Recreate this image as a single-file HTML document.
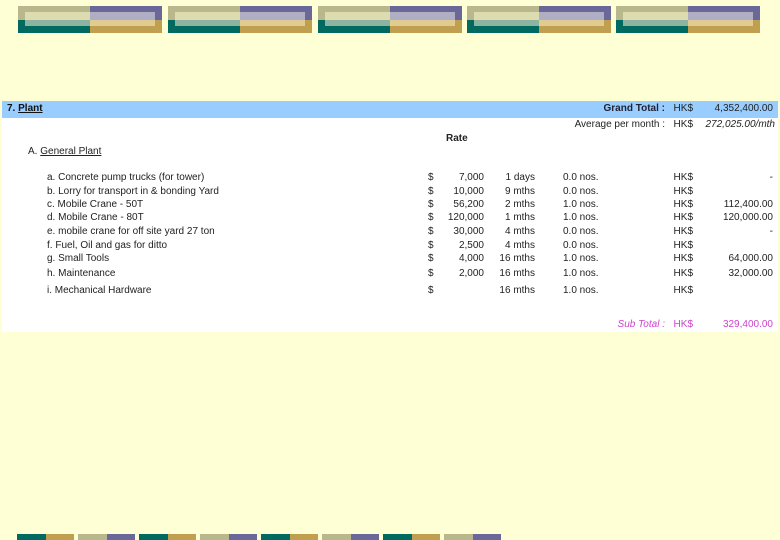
<!DOCTYPE html>
<html><head><style>
body{margin:0;width:780px;height:540px;background:#ffffd5;position:relative;overflow:hidden;font-family:"Liberation Sans",sans-serif;}
.tb{position:absolute;top:6px;width:144px;height:27px;}
.tb div{position:absolute;}
.bb{position:absolute;top:534px;height:6px;width:57px;}
.bb div{position:absolute;top:0;height:6px;}
#panel{position:absolute;left:2px;top:101px;width:776px;height:231px;background:#fff;}
#hdr{position:absolute;left:2px;top:101px;width:776px;height:17px;background:#99ccff;}
.t{position:absolute;font-size:10px;color:#222;white-space:nowrap;line-height:12px;}
.r{text-align:right;}
</style></head><body>
<div id="panel"></div><div id="hdr"></div>
<script>
var h='';
[18,168,318,467,616].forEach(function(x){
h+='<div class="tb" style="left:'+x+'px"><div style="left:0;top:0;width:72px;height:14px;background:#b8b88c"></div><div style="left:72px;top:0;width:72px;height:14px;background:#6a6898"></div><div style="left:0;top:14px;width:72px;height:13px;background:#006a60"></div><div style="left:72px;top:14px;width:72px;height:13px;background:#c0a050"></div><div style="left:7px;top:6px;width:65px;height:8px;background:#dcdcb0"></div><div style="left:72px;top:6px;width:65px;height:8px;background:#b0aec4"></div><div style="left:7px;top:14px;width:65px;height:6px;background:#8cb4a0"></div><div style="left:72px;top:14px;width:65px;height:6px;background:#e0cc90"></div></div>';});
for(var i=0;i<8;i++){var x=17+i*61;var a=i%2==0?'#006a60':'#b8b88c',b=i%2==0?'#c0a050':'#6a6898';
h+='<div class="bb" style="left:'+x+'px"><div style="left:0;width:29px;background:'+a+'"></div><div style="left:29px;width:28px;background:'+b+'"></div></div>';}
var rows=[
[172,'a. Concrete pump trucks (for tower)','7,000','1 days','0.0 nos.','-'],
[186,'b.  Lorry for transport in & bonding Yard','10,000','9 mths','0.0 nos.',''],
[199,'c. Mobile Crane - 50T','56,200','2 mths','1.0 nos.','112,400.00'],
[212,'d. Mobile Crane - 80T','120,000','1 mths','1.0 nos.','120,000.00'],
[226,'e. mobile crane for off site yard 27 ton','30,000','4 mths','0.0 nos.','-'],
[240,' f. Fuel, Oil and gas for ditto','2,500','4 mths','0.0 nos.',''],
[253,'g. Small Tools','4,000','16 mths','1.0 nos.','64,000.00'],
[268,'h. Maintenance','2,000','16 mths','1.0 nos.','32,000.00'],
[285,' i. Mechanical Hardware','','16 mths','1.0 nos.','']];
rows.forEach(function(r){var y=r[0];
h+='<div class="t" style="left:47px;top:'+y+'px">'+r[1]+'</div>';
h+='<div class="t" style="left:428px;top:'+y+'px">$</div>';
h+='<div class="t r" style="left:430px;width:54px;top:'+y+'px">'+r[2]+'</div>';
h+='<div class="t r" style="left:490px;width:45px;top:'+y+'px">'+r[3]+'</div>';
h+='<div class="t" style="left:563px;top:'+y+'px">'+r[4]+'</div>';
h+='<div class="t r" style="left:640px;width:53px;top:'+y+'px">HK$</div>';
h+='<div class="t r" style="left:680px;width:93px;top:'+y+'px">'+r[5]+'</div>';});
document.write(h);
</script>
<div class="t" style="left:7px;top:103px;font-weight:bold;color:#111">7. <u>Plant</u></div>
<div class="t r" style="left:500px;width:165px;top:103px;font-weight:bold;color:#223">Grand Total :</div>
<div class="t r" style="left:640px;width:53px;top:103px">HK$</div>
<div class="t r" style="left:680px;width:93px;top:103px">4,352,400.00</div>
<div class="t r" style="left:450px;width:215px;top:119px">Average per month :</div>
<div class="t r" style="left:640px;width:53px;top:119px">HK$</div>
<div class="t r" style="left:680px;width:95px;top:119px;font-style:italic">272,025.00/mth</div>
<div class="t" style="left:446px;top:133px;font-weight:bold">Rate</div>
<div class="t" style="left:28px;top:146px">A. <u>General Plant</u></div>
<div class="t r" style="left:560px;width:105px;top:319px;color:#cc44cc;font-style:italic">Sub Total :</div>
<div class="t r" style="left:640px;width:53px;top:319px;color:#cc44cc">HK$</div>
<div class="t r" style="left:680px;width:93px;top:319px;color:#cc44cc">329,400.00</div>
</body></html>
